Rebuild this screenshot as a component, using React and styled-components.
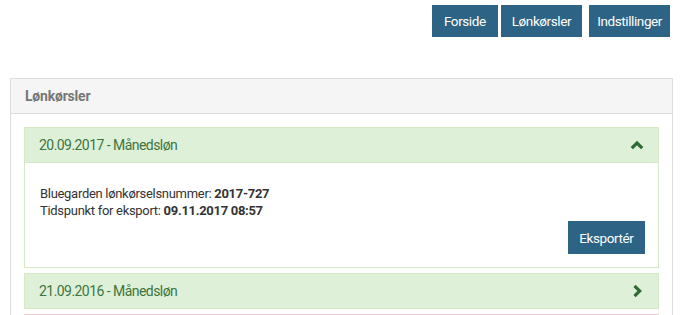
import React from 'react'
import styled, { createGlobalStyle } from 'styled-components'

const GlobalStyle = createGlobalStyle`
  body {
    margin: 0;
    font-family: Roboto, "Liberation Sans", sans-serif;
    font-size: 13px;
    letter-spacing: -0.3px;
    color: #333;
    background: #fff;
  }
`;

const Page = styled.div`
  padding: 5px 7px 0 10px;
`;

const TopNav = styled.nav`
  display: flex;
  justify-content: flex-end;
  gap: 3px;
  margin-bottom: 41px;
  padding-right: 3px;
`;

const NavButton = styled.button`
  background-color: #2d6384;
  border: none;
  color: #fff;
  font-family: inherit;
  font-size: 13.5px;
  letter-spacing: -0.4px;
  height: 32px;
  padding: 0 ${props => props.pad || 11}px;
  margin-left: ${props => props.spaced ? '4px' : '0'};
  cursor: pointer;
`;

const Panel = styled.section`
  border: 1px solid #ddd;
  border-bottom: none;
`;

const PanelHeading = styled.div`
  background-color: #f5f5f5;
  border-bottom: 1px solid #ddd;
  color: #777;
  font-weight: 700;
  font-size: 14px;
  letter-spacing: -0.2px;
  height: 34px;
  display: flex;
  align-items: center;
  padding: 0 14px;
`;

const PanelBody = styled.div`
  display: flex;
  flex-direction: column;
  gap: 5px;
  padding: 13px 13px 0;
`;

const Run = styled.div`
  border: 1px solid ${props => props.danger ? '#ebccd1' : '#d6e9c6'};
`;

const RunHeading = styled.div`
  background-color: ${props => props.danger ? '#f2dede' : '#dff0d8'};
  color: #3c763d;
  font-size: 14px;
  letter-spacing: -0.55px;
  height: 34px;
  display: flex;
  align-items: center;
  justify-content: space-between;
  padding: 0 14px 0 14px;
  border-bottom: ${props => props.open ? '1px solid #d6e9c6' : 'none'};
`;

const RunBody = styled.div`
  padding: 22px 13px 13px 15px;
  line-height: 17px;
  display: flex;
  flex-direction: column;
`;

const Actions = styled.div`
  display: flex;
  justify-content: flex-end;
  margin-top: 2px;
`;

const ExportButton = styled(NavButton)`
  height: 33px;
`;

const Chevron = ({ dir }) => (
  <svg width="14" height="14" viewBox="0 0 14 14" aria-hidden="true">
    <polyline
      points={dir === 'up' ? '1.8,10.2 7,5 12.2,10.2' : '4.5,1.8 9.7,7 4.5,12.2'}
      fill="none"
      stroke="#2e6b33"
      strokeWidth="3.2"
      strokeLinecap="butt"
      strokeLinejoin="miter"
    />
  </svg>
);

export default function App() {
  return (
    <>
      <GlobalStyle />
      <Page>
        <TopNav>
          <NavButton pad={12}>Forside</NavButton>
          <NavButton>Lønkørsler</NavButton>
          <NavButton spaced pad={8}>Indstillinger</NavButton>
        </TopNav>
        <Panel>
          <PanelHeading>Lønkørsler</PanelHeading>
          <PanelBody>
            <Run>
              <RunHeading open>
                <span>20.09.2017 - Månedsløn</span>
                <Chevron dir="up" />
              </RunHeading>
              <RunBody>
                <div>Bluegarden lønkørselsnummer: <b>2017-727</b></div>
                <div>Tidspunkt for eksport: <b>09.11.2017 08:57</b></div>
                <Actions>
                  <ExportButton pad={11.5}>Eksportér</ExportButton>
                </Actions>
              </RunBody>
            </Run>
            <Run>
              <RunHeading>
                <span>21.09.2016 - Månedsløn</span>
                <Chevron dir="right" />
              </RunHeading>
            </Run>
            <Run danger>
              <RunHeading danger />
            </Run>
          </PanelBody>
        </Panel>
      </Page>
    </>
  )
}
